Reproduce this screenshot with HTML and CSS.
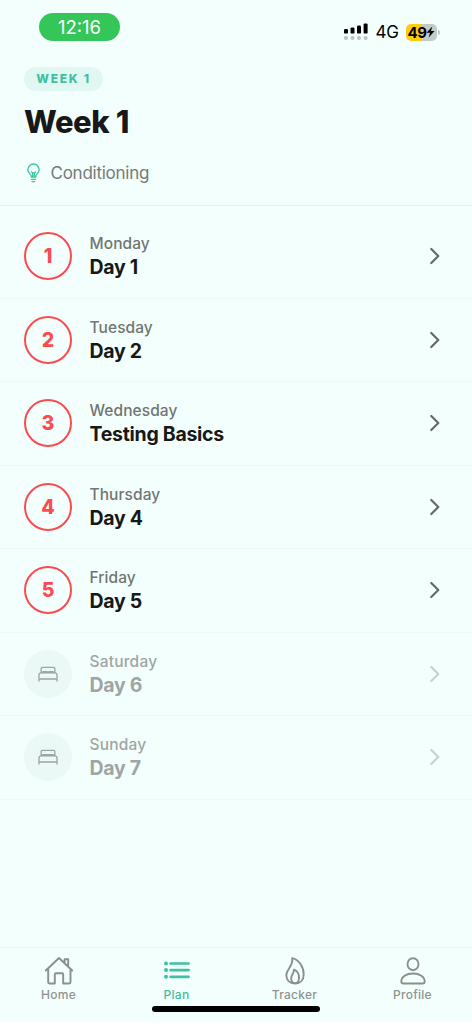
FILE: index.html
```html
<!DOCTYPE html>
<html lang="en">
<head>
<meta charset="utf-8">
<title>Week 1</title>
<link rel="stylesheet" href="styles.css">
</head>
<body>
<div class="screen">
  <div class="status">
    <div class="clock">12:16</div>
    <div class="indicators">
      <svg class="signal" width="24" height="18" viewBox="0 0 24 18">
        <g fill="#000"><rect x="0" y="6" width="4" height="4.6" rx="1.2"/><rect x="6.5" y="4.6" width="4" height="6" rx="1.2"/><rect x="13" y="2.6" width="4" height="8" rx="1.2"/><rect x="19.6" y="0.4" width="4" height="10.2" rx="1.2"/></g>
        <g fill="#bcc5c2"><circle cx="2" cy="15" r="2.1"/><circle cx="8.5" cy="15" r="2.1"/><circle cx="15" cy="15" r="2.1"/><circle cx="21.6" cy="15" r="2.1"/></g>
      </svg>
      <span class="network">4G</span>
      <div class="battery"><span>49</span><svg width="9" height="12" viewBox="0 0 9 12"><path d="M6.3 .5.5 6.8H4L2.7 11.5 8.5 5H5Z" fill="#000"/></svg></div>
      <i class="battery-tip"></i>
    </div>
  </div>
  <header class="header">
    <span class="tag">WEEK 1</span>
    <h1 class="title">Week 1</h1>
    <div class="focus">
      <svg width="14" height="20" viewBox="0 0 14 20" fill="none" stroke="#3dc1a2" stroke-width="1.3" stroke-linecap="round" stroke-linejoin="round"><path d="M4.2 14.2V12.8C4.2 11.5.8 10 .8 6.7A5.7 5.7 0 0 1 12.2 6.7C12.2 10 8.8 11.5 8.8 12.8V14.2ZM5.6 14V9.8L4.4 8.9M7.4 14V9.8L8.6 8.9M5.6 9.8H7.4M4.6 16.4H8.4M5.2 18.6H7.8"/></svg>
      <span class="focus-text">Conditioning</span>
    </div>
  </header>
  <main class="list">
    <div class="row"><div class="badge">1</div><div class="copy"><span class="weekday">Monday</span><span class="name">Day 1</span></div><svg class="chevron" viewBox="0 0 10 18"><path d="m1.3 2 7 7-7 7"/></svg></div>
    <div class="row"><div class="badge">2</div><div class="copy"><span class="weekday">Tuesday</span><span class="name">Day 2</span></div><svg class="chevron" viewBox="0 0 10 18"><path d="m1.3 2 7 7-7 7"/></svg></div>
    <div class="row"><div class="badge">3</div><div class="copy"><span class="weekday">Wednesday</span><span class="name">Testing Basics</span></div><svg class="chevron" viewBox="0 0 10 18"><path d="m1.3 2 7 7-7 7"/></svg></div>
    <div class="row"><div class="badge">4</div><div class="copy"><span class="weekday">Thursday</span><span class="name">Day 4</span></div><svg class="chevron" viewBox="0 0 10 18"><path d="m1.3 2 7 7-7 7"/></svg></div>
    <div class="row"><div class="badge">5</div><div class="copy"><span class="weekday">Friday</span><span class="name">Day 5</span></div><svg class="chevron" viewBox="0 0 10 18"><path d="m1.3 2 7 7-7 7"/></svg></div>
    <div class="row rest"><div class="badge"><svg class="bed" viewBox="0 0 20 16"><path d="M3.1 6.5V2.8Q3.1 1.3 4.6 1.3H15.4Q16.9 1.3 16.9 2.8V6.5M1 15V9Q1 6.9 3.2 6.9H16.8Q19 6.9 19 9V15M1 13H19M4.2 6.5Q4.2 5.6 5 5.6H9Q10 5.6 10 6.5Q10 5.6 11 5.6H15Q15.8 5.6 15.8 6.5"/></svg></div><div class="copy"><span class="weekday">Saturday</span><span class="name">Day 6</span></div><svg class="chevron" viewBox="0 0 10 18"><path d="m1.3 2 7 7-7 7"/></svg></div>
    <div class="row rest"><div class="badge"><svg class="bed" viewBox="0 0 20 16"><path d="M3.1 6.5V2.8Q3.1 1.3 4.6 1.3H15.4Q16.9 1.3 16.9 2.8V6.5M1 15V9Q1 6.9 3.2 6.9H16.8Q19 6.9 19 9V15M1 13H19M4.2 6.5Q4.2 5.6 5 5.6H9Q10 5.6 10 6.5Q10 5.6 11 5.6H15Q15.8 5.6 15.8 6.5"/></svg></div><div class="copy"><span class="weekday">Sunday</span><span class="name">Day 7</span></div><svg class="chevron" viewBox="0 0 10 18"><path d="m1.3 2 7 7-7 7"/></svg></div>
  </main>
  <nav class="tabs">
    <div class="tab"><svg viewBox="0 0 30 30"><path d="M1.8 14.5 15 2 28.2 14.5M4.2 12.6V26.3Q4.2 27.5 5.4 27.5H10.8V18.5Q10.8 17.2 12 17.2H18Q19.2 17.2 19.2 18.5V27.5H25.3Q26.5 27.5 26.5 26.3V13M20.6 7V3.3H24.2V10.5"/></svg><span>Home</span></div>
    <div class="tab active"><svg viewBox="0 0 30 30"><path d="M8.6 7.5H26.6M8.6 14.1H26.6M8.6 20.8H26.6" stroke-width="2.7"/><g fill="#3dc1a2" stroke="none"><circle cx="4" cy="7.5" r="2"/><circle cx="4" cy="14.1" r="2"/><circle cx="4" cy="20.8" r="2"/></g></svg><span>Plan</span></div>
    <div class="tab"><svg viewBox="0 0 30 30"><path d="M12.2 2.1C18.5 3.2 23.7 10.7 23.7 18.2C23.7 24.2 20 27.5 15 27.5C10 27.5 6.3 24.5 6.3 19.1C6.3 13.2 13.5 10.4 12.2 2.1ZM14 13.6C17.4 14.7 19 18.5 19 21.5C19 25.2 17.2 27.3 15.1 27.3C12.9 27.3 11.2 25.4 11.2 22C11.2 19.2 14 17.6 14 13.6Z"/></svg><span>Tracker</span></div>
    <div class="tab"><svg viewBox="0 0 30 30"><ellipse cx="15" cy="8.2" rx="5.5" ry="6"/><path d="M3.3 25.5C3.3 20.8 8.2 17.5 15 17.5S26.7 20.8 26.7 25.5Q26.7 27.5 24.7 27.5H5.3Q3.3 27.5 3.3 25.5Z"/></svg><span>Profile</span></div>
  </nav>
  <div class="home-bar"></div>
</div>
</body>
</html>
```
FILE: styles.css
```css
* { box-sizing: border-box; }
body { margin: 0; background: #f3fffc; font-family: Inter, "Liberation Sans", sans-serif; color: #181818; }
.screen { width: 472px; height: 1024px; display: flex; flex-direction: column; overflow: hidden; background: #f3fffc; border-bottom: 2px solid #fff; }
.status { height: 67px; padding: 13px 32.5px 0 39px; display: flex; justify-content: space-between; align-items: flex-start; }
.clock { width: 81px; height: 28px; border-radius: 14px; background: #35c659; color: #fff; font-size: 18.5px; line-height: 29px; text-align: center; }
.indicators { display: flex; align-items: center; height: 18px; margin-top: 10px; }
.signal { display: block; }
.network { margin-left: 7.5px; width: 23px; font-size: 17px; letter-spacing: -.2px; color: #000; line-height: 18px; }
.battery { width: 31px; height: 17px; margin-left: 7.5px; border-radius: 5px; background: linear-gradient(90deg, #ffcc0c 50%, #c1cbc8 50%); display: flex; align-items: center; justify-content: center; font-size: 15px; font-weight: 700; letter-spacing: -.5px; color: #000; }
.battery-tip { width: 1.5px; height: 5px; margin-left: 1px; border-radius: 0 2px 2px 0; background: #c1cbc8; }
.header { height: 139px; padding: 0 24px; border-bottom: 1px solid #e4f1ee; display: flex; flex-direction: column; align-items: flex-start; }
.tag { height: 24px; width: 79px; border-radius: 12px; background: #e1f8f2; color: #3dc1a2; font-size: 12px; font-weight: 800; letter-spacing: 1.75px; line-height: 24px; text-align: center; white-space: nowrap; }
.title { margin: 12px 0 0; font-size: 31px; line-height: 38px; font-weight: 800; letter-spacing: -.4px; }
.focus { display: flex; align-items: center; margin: 21px 0 0 3px; height: 22px; gap: 9.5px; color: #767a78; font-size: 17px; }
.focus-text { letter-spacing: -.25px; }
.list { flex: 1; padding-top: 9px; }
.row { height: 83.5px; padding: 0 32px 0 24px; border-bottom: 1px solid #ebf8f5; display: flex; align-items: center; }
.badge { width: 48px; height: 48px; border: 2px solid #fb4b50; border-radius: 50%; color: #fb4b50; display: flex; align-items: center; justify-content: center; font-size: 19.5px; font-weight: 800; }
.copy { flex: 1; margin-left: 17.5px; display: flex; flex-direction: column; }
.weekday { font-size: 15.5px; line-height: 23px; font-weight: 500; letter-spacing: .08px; color: #717573; }
.name { font-size: 19.5px; line-height: 25px; font-weight: 650; letter-spacing: -.28px; }
.chevron { width: 10px; height: 18px; fill: none; stroke: #666967; stroke-width: 2.2; stroke-linecap: round; stroke-linejoin: round; }
.rest .badge { border: 0; background: #eaf9f5; }
.bed { width: 20px; height: 16px; fill: none; stroke: #9da4a1; stroke-width: 1.3; stroke-linecap: round; }
.rest .weekday, .rest .name { color: #9fa5a3; }
.rest .weekday { letter-spacing: .2px; }
.rest .chevron { stroke: #c8d1ce; }
.tabs { height: 59px; border-top: 1px solid #e8f5f2; padding-top: 8px; display: grid; grid-template-columns: repeat(4, 1fr); }
.tab { display: flex; flex-direction: column; align-items: center; padding-right: 1px; color: #8e9391; font-size: 12px; font-weight: 500; line-height: 17px; letter-spacing: .25px; }
.tab svg { width: 30px; height: 30px; fill: none; stroke: #8b8f8d; stroke-width: 1.9; stroke-linecap: round; stroke-linejoin: round; }
.tab.active { color: #3dc1a2; }
.tab.active svg { stroke: #3dc1a2; }
.home-bar { flex: none; width: 168px; height: 6px; margin: 0 auto 10px; border-radius: 3px; background: #000; }
```
